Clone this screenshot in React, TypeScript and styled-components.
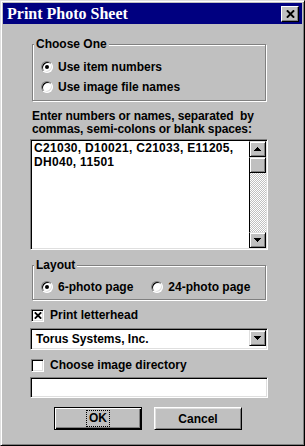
import React from 'react';
import styled, { createGlobalStyle } from 'styled-components';

const GlobalStyle = createGlobalStyle`
	html, body {
		margin: 0;
		padding: 0;
		background: #c0c0c0;
	}
	body {
		font-family: "Liberation Sans", Arial, sans-serif;
		font-size: 12px;
		font-weight: 700;
		color: #000;
	}
`;

const Window = styled.div`
	box-sizing: border-box;
	width: 305px;
	height: 446px;
	background: #c0c0c0;
	border: 1px solid;
	border-color: #dfdfdf #000 #000 #dfdfdf;
	box-shadow: inset 1px 1px #fff, inset -1px -1px #808080;
	padding: 2px;
	display: flex;
	flex-direction: column;
`;

const TitleBar = styled.div`
	height: 21px;
	background: #000080;
	display: flex;
	align-items: center;
	justify-content: space-between;
	padding: 0 3px 0 4px;
`;

const TitleText = styled.span`
	font-family: "Liberation Serif", "Times New Roman", serif;
	font-size: 16px;
	font-weight: 700;
	color: #fff;
	line-height: 21px;
`;

const CloseButton = styled.div`
	box-sizing: border-box;
	width: 18px;
	height: 16px;
	background: #c0c0c0;
	border: 1px solid;
	border-color: #fff #000 #000 #fff;
	box-shadow: inset -1px -1px #808080;
	display: flex;
	align-items: center;
	justify-content: center;
`;

const Body = styled.div`
	display: flex;
	flex-direction: column;
	align-items: flex-start;
	padding: 14px 0 0 27px;
`;

const Group = styled.fieldset<{ $top?: number }>`
	box-sizing: border-box;
	width: 234px;
	min-width: 0;
	margin: ${(p) => p.$top ?? 0}px 0 0 2px;
	padding: 0;
	border: 1px solid #808080;
	box-shadow: 1px 1px #fff, inset 1px 1px #fff;
`;

const Legend = styled.legend`
	padding: 0 2px;
	margin-left: 1px;
	line-height: 13px;
	background: #c0c0c0;
`;

const GroupBody = styled.div<{ $row?: boolean }>`
	display: flex;
	flex-direction: ${(p) => (p.$row ? 'row' : 'column')};
	gap: ${(p) => (p.$row ? '18px' : '0')};
	padding: ${(p) => (p.$row ? '5px 0 2px 8px' : '6px 0 3px 8px')};
`;

const OptionRow = styled.label`
	display: flex;
	align-items: center;
	gap: 5px;
	height: 20px;
	white-space: nowrap;
`;

const Radio = styled.span<{ $checked?: boolean }>`
	position: relative;
	box-sizing: border-box;
	width: 12px;
	height: 12px;
	border-radius: 50%;
	border: 1px solid;
	border-color: #808080 #fff #fff #808080;
	background: #fff;
	box-shadow: inset 1px 1px #000, inset -1px -1px #dfdfdf;
	flex-shrink: 0;

	&::after {
		content: '';
		display: ${(p) => (p.$checked ? 'block' : 'none')};
		position: absolute;
		left: 3px;
		top: 3px;
		width: 4px;
		height: 4px;
		border-radius: 50%;
		background: #000;
	}
`;

const Hint = styled.div`
	margin: 9px 0 3px 2px;
	line-height: 13px;
	letter-spacing: -0.1px;
	white-space: pre;
`;

const Sunken = styled.div<{ $height: number }>`
	box-sizing: border-box;
	width: 238px;
	height: ${(p) => p.$height}px;
	border: 1px solid;
	border-color: #808080 #fff #fff #808080;
	padding: 1px;
	box-shadow: inset 1px 1px #000, inset -1px -1px #dfdfdf;
	background: #fff;
	display: flex;
`;

const ListText = styled.div`
	flex: 1;
	padding: 0 2px;
	line-height: 14px;
	letter-spacing: 0.3px;
`;

const ScrollBar = styled.div`
	width: 17px;
	display: flex;
	flex-direction: column;
`;

const ScrollButton = styled.div`
	box-sizing: border-box;
	height: 16px;
	background: #c0c0c0;
	border: 1px solid;
	border-color: #dfdfdf #000 #000 #000;
	box-shadow: inset 1px 1px #fff, inset -1px -1px #808080;
	display: flex;
	align-items: center;
	justify-content: center;
`;

const ScrollTrack = styled.div`
	flex: 1;
	border-left: 1px solid #000;
	background: repeating-conic-gradient(#fff 0 25%, #c0c0c0 0 50%) 0 0 / 2px 2px;
`;

const CheckRow = styled.label<{ $top: number }>`
	display: flex;
	align-items: center;
	gap: 6px;
	height: 16px;
	margin: ${(p) => p.$top}px 0 0 1px;
`;

const CheckBox = styled.span`
	box-sizing: border-box;
	width: 13px;
	height: 13px;
	border: 1px solid;
	border-color: #808080 #fff #fff #808080;
	background: #fff;
	box-shadow: inset 1px 1px #000, inset -1px -1px #dfdfdf;
	display: flex;
	align-items: center;
	justify-content: center;
`;

const Combo = styled(Sunken)`
	margin-top: 5px;
`;

const ComboText = styled.div`
	flex: 1;
	padding-left: 4px;
	line-height: 18px;
`;

const DropButton = styled(ScrollButton)`
	width: 17px;
	border-color: #dfdfdf #000 #000 #dfdfdf;
`;

const Field = styled(Sunken)`
	margin-top: 4px;
`;

const ButtonRow = styled.div`
	display: flex;
	gap: 12px;
	margin-top: 9px;
	padding-left: 24px;
`;

const PushButton = styled.div<{ $default?: boolean }>`
	box-sizing: border-box;
	width: 88px;
	height: 23px;
	display: flex;
	align-items: center;
	justify-content: center;
	background: #c0c0c0;
	border: 1px solid;
	border-color: ${(p) => (p.$default ? '#000' : '#fff #000 #000 #fff')};
	box-shadow: ${(p) =>
		p.$default
			? 'inset 1px 1px #fff, inset -1px -1px #000, inset -2px -2px #808080'
			: 'inset 1px 1px #dfdfdf, inset -1px -1px #808080'};
`;

const FocusLabel = styled.span`
	outline: 1px dotted #000;
	padding: 1px 2px;
	line-height: 13px;
`;

const ArrowUp = () => (
	<svg width='7' height='4' viewBox='0 0 7 4' shapeRendering='crispEdges'>
		<path d='M3 0h1v1h1v1h1v1h1v1H0V3h1V2h1V1h1z' fill='#000' />
	</svg>
);

const ArrowDown = () => (
	<svg width='7' height='4' viewBox='0 0 7 4' shapeRendering='crispEdges'>
		<path d='M0 0h7v1H6v1H5v1H4v1H3V3H2V2H1V1H0z' fill='#000' />
	</svg>
);

const Cross = ({ size }: { size: number }) => (
	<svg width={size} height={size - 1} viewBox='0 0 8 7'>
		<path d='M0.8 0.3L7.2 6.7M7.2 0.3L0.8 6.7' stroke='#000' strokeWidth='1.8' />
	</svg>
);

export default function App() {
	return (
		<>
			<GlobalStyle />
			<Window>
				<TitleBar>
					<TitleText>Print Photo Sheet</TitleText>
					<CloseButton>
						<Cross size={9} />
					</CloseButton>
				</TitleBar>
				<Body>
					<Group>
						<Legend>Choose One</Legend>
						<GroupBody>
							<OptionRow>
								<Radio $checked />
								Use item numbers
							</OptionRow>
							<OptionRow>
								<Radio />
								Use image file names
							</OptionRow>
						</GroupBody>
					</Group>

					<Hint>
						{'Enter numbers or names, separated  by\ncommas, semi-colons or blank spaces:'}
					</Hint>
					<Sunken $height={111}>
						<ListText>
							C21030, D10021, C21033, E11205,
							<br />
							DH040, 11501
						</ListText>
						<ScrollBar>
							<ScrollButton>
								<ArrowUp />
							</ScrollButton>
							<ScrollButton />
							<ScrollTrack />
							<ScrollButton>
								<ArrowDown />
							</ScrollButton>
						</ScrollBar>
					</Sunken>

					<Group $top={9}>
						<Legend>Layout</Legend>
						<GroupBody $row>
							<OptionRow>
								<Radio $checked />
								6-photo page
							</OptionRow>
							<OptionRow>
								<Radio />
								24-photo page
							</OptionRow>
						</GroupBody>
					</Group>

					<CheckRow $top={7}>
						<CheckBox>
							<Cross size={8} />
						</CheckBox>
						Print letterhead
					</CheckRow>
					<Combo $height={22}>
						<ComboText>Torus Systems, Inc.</ComboText>
						<DropButton>
							<ArrowDown />
						</DropButton>
					</Combo>

					<CheckRow $top={7}>
						<CheckBox />
						Choose image directory
					</CheckRow>
					<Field $height={21} />

					<ButtonRow>
						<PushButton $default>
							<FocusLabel>OK</FocusLabel>
						</PushButton>
						<PushButton>Cancel</PushButton>
					</ButtonRow>
				</Body>
			</Window>
		</>
	);
}
